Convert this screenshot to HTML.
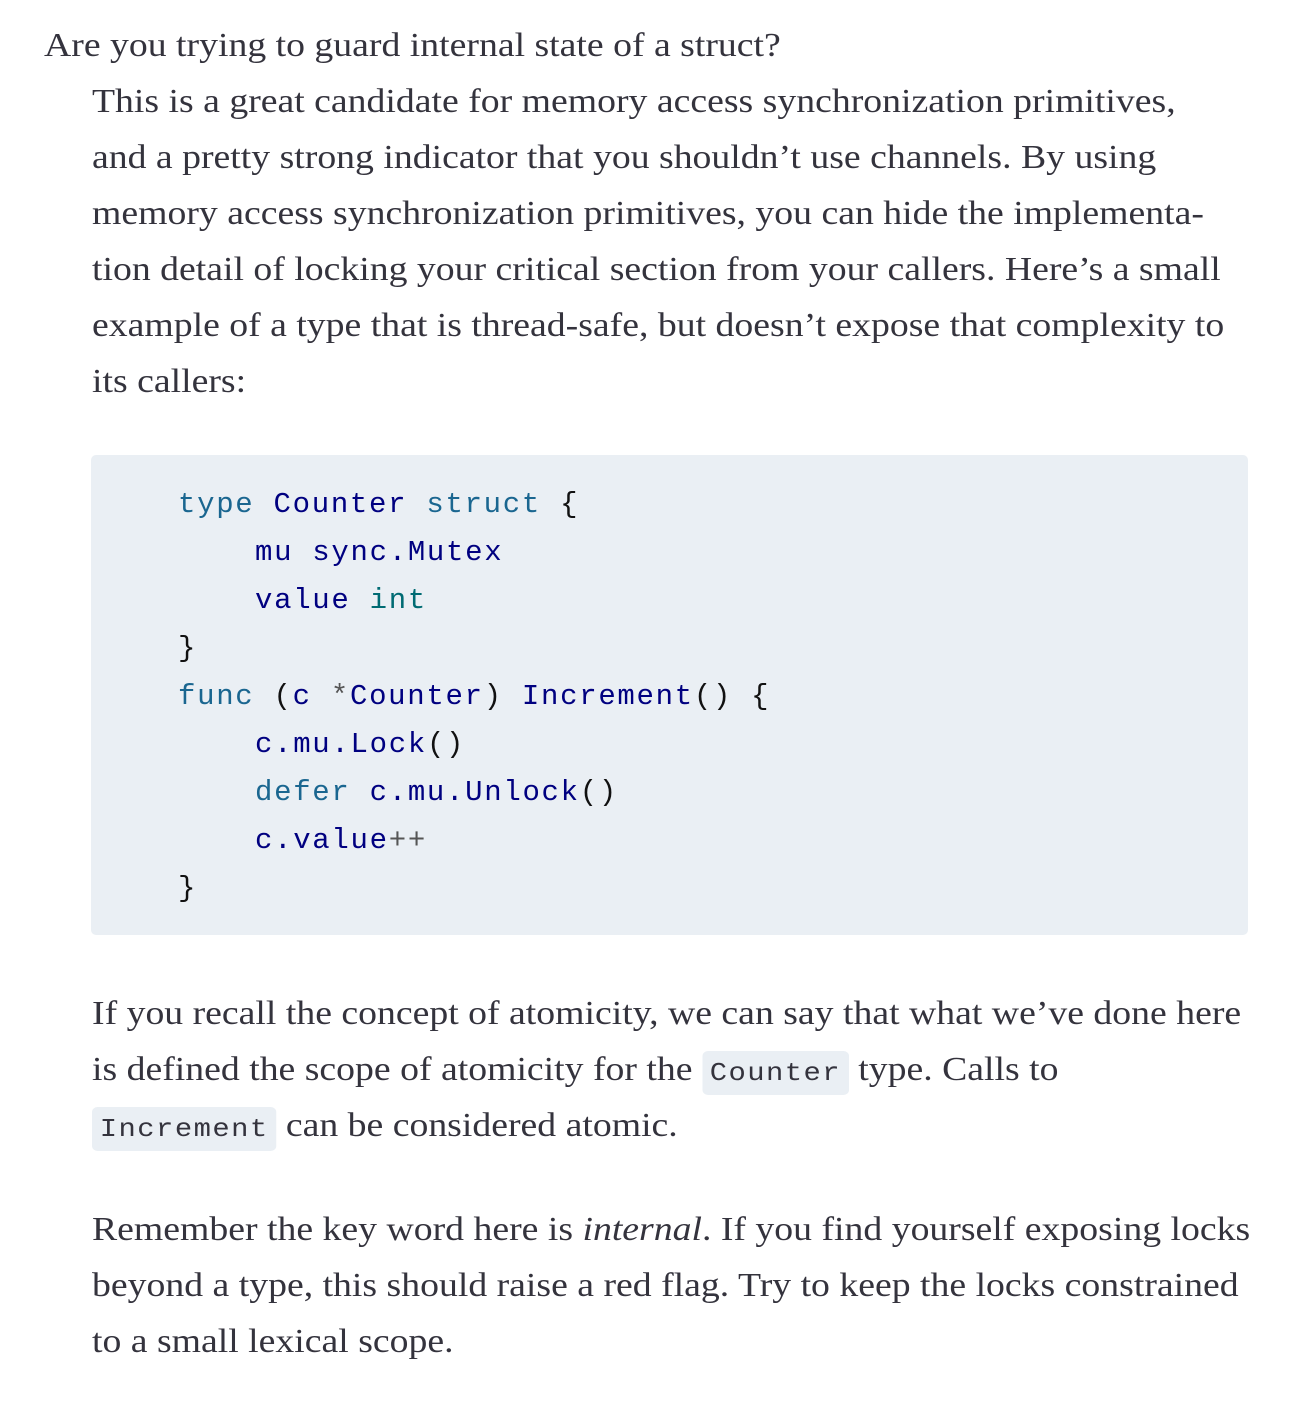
<!DOCTYPE html>
<html><head><meta charset="utf-8"><style>
body{margin:0;width:1300px;height:1410px;background:#fff;position:relative;overflow:hidden;font-family:"Liberation Serif",serif;color:#34333d}
.l{position:absolute;white-space:nowrap;font-size:34px;line-height:56px;height:56px;transform:scaleX(1.11);transform-origin:0 50%;margin-top:2px}
.code{position:absolute;left:91px;top:455px;width:1157px;height:480px;background:#eaeff4;border-radius:5px}
.c{position:absolute;white-space:pre;font-family:"Liberation Mono",monospace;font-size:29px;letter-spacing:1.7px;line-height:48px;color:#000080;margin-top:2px}
.k{color:#1a6690}.t{color:#006b73}.p{color:#111}.o{color:#555}
code{font-family:"Liberation Mono",monospace;font-size:26px;letter-spacing:1.3px;background:#eaeff4;border-radius:5px;padding:7px 7px;color:#34333d}
</style></head><body>
<div class="l" style="left:44px;top:16px">Are you trying to guard internal state of a struct?</div>
<div class="l" style="left:92px;top:72px">This is a great candidate for memory access synchronization primitives,</div>
<div class="l" style="left:92px;top:128px">and a pretty strong indicator that you shouldn’t use channels. By using</div>
<div class="l" style="left:92px;top:184px">memory access synchronization primitives, you can hide the implementa-</div>
<div class="l" style="left:92px;top:240px">tion detail of locking your critical section from your callers. Here’s a small</div>
<div class="l" style="left:92px;top:296px">example of a type that is thread-safe, but doesn’t expose that complexity to</div>
<div class="l" style="left:92px;top:352px">its callers:</div>
<div class="code"></div>
<div class="c" style="left:178px;top:479px"><span class="k">type</span> Counter <span class="k">struct</span> <span class="p">{</span></div>
<div class="c" style="left:255px;top:527px">mu sync.Mutex</div>
<div class="c" style="left:255px;top:575px">value <span class="t">int</span></div>
<div class="c" style="left:178px;top:623px"><span class="p">}</span></div>
<div class="c" style="left:178px;top:671px"><span class="k">func</span> <span class="p">(</span>c <span class="o">*</span>Counter<span class="p">)</span> Increment<span class="p">()</span> <span class="p">{</span></div>
<div class="c" style="left:255px;top:719px">c.mu.Lock<span class="p">()</span></div>
<div class="c" style="left:255px;top:767px"><span class="k">defer</span> c.mu.Unlock<span class="p">()</span></div>
<div class="c" style="left:255px;top:815px">c.value<span class="o">++</span></div>
<div class="c" style="left:178px;top:863px"><span class="p">}</span></div>
<div class="l" style="left:92px;top:984px">If you recall the concept of atomicity, we can say that what we’ve done here</div>
<div class="l" style="left:92px;top:1040px">is defined the scope of atomicity for the <code>Counter</code> type. Calls to</div>
<div class="l" style="left:92px;top:1096px"><code>Increment</code> can be considered atomic.</div>
<div class="l" style="left:92px;top:1200px">Remember the key word here is <i>internal</i>. If you find yourself exposing locks</div>
<div class="l" style="left:92px;top:1256px">beyond a type, this should raise a red flag. Try to keep the locks constrained</div>
<div class="l" style="left:92px;top:1312px">to a small lexical scope.</div>
</body></html>
